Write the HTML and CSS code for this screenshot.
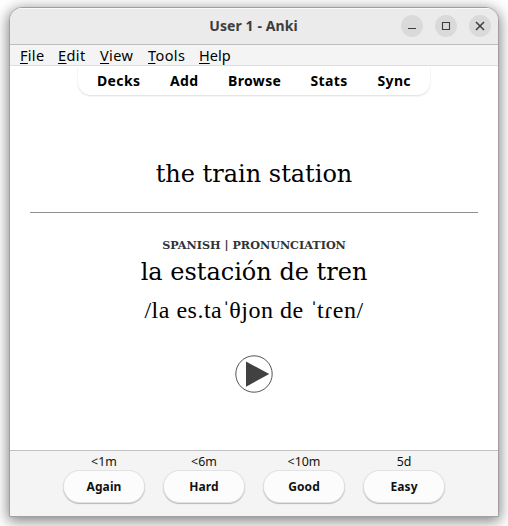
FILE: index.html
```html
<!DOCTYPE html>
<html lang="en">
<head>
<meta charset="utf-8">
<title>User 1 - Anki</title>
<link rel="stylesheet" href="styles.css">
</head>
<body>
<div class="window">
  <header class="titlebar">
    <h1 class="title">User 1 - Anki</h1>
    <div class="controls">
      <span class="control"><svg width="22" height="22" viewBox="0 0 22 22"><path d="M7 13.5h8"/></svg></span>
      <span class="control"><svg width="22" height="22" viewBox="0 0 22 22"><path d="M7.5 7.5h7v7h-7z"/></svg></span>
      <span class="control"><svg width="22" height="22" viewBox="0 0 22 22"><path class="cross" d="M7 7l8 8M15 7l-8 8"/></svg></span>
    </div>
  </header>
  <nav class="menubar">
    <span class="menu file"><u>F</u>ile</span>
    <span class="menu edit"><u>E</u>dit</span>
    <span class="menu view"><u>V</u>iew</span>
    <span class="menu tools"><u>T</u>ools</span>
    <span class="menu help"><u>H</u>elp</span>
  </nav>
  <main class="card">
    <nav class="toolbar">
      <span class="link decks">Decks</span>
      <span class="link add">Add</span>
      <span class="link browse">Browse</span>
      <span class="link stats">Stats</span>
      <span class="link sync">Sync</span>
    </nav>
    <p class="front">the train station</p>
    <hr class="answer-rule">
    <p class="caption">SPANISH | PRONUNCIATION</p>
    <p class="word">la estación de tren</p>
    <p class="ipa">/la es.ta<span class="stress">ˈ</span>θjon de <span class="stress">ˈ</span>tɾen/</p>
    <svg class="play" width="38" height="38" viewBox="0 0 38 38"><circle cx="19" cy="19" r="18.2"/><path d="M11 6.5v25.2L34.2 19z"/></svg>
  </main>
  <footer class="answers">
    <div class="answer"><span class="due">&lt;1m</span><button class="ease">Again</button></div>
    <div class="answer"><span class="due">&lt;6m</span><button class="ease">Hard</button></div>
    <div class="answer"><span class="due">&lt;10m</span><button class="ease">Good</button></div>
    <div class="answer"><span class="due">5d</span><button class="ease">Easy</button></div>
  </footer>
</div>
</body>
</html>
```
FILE: styles.css
```css
* { box-sizing: border-box; }
body {
  margin: 0;
  padding: 7px 9px 9px;
  height: 526px;
  overflow: hidden;
  background: #fff;
  font-family: "Noto Sans", "Open Sans", sans-serif;
}
p, h1 { margin: 0; white-space: nowrap; }
.window {
  display: flex;
  flex-direction: column;
  width: 490px;
  height: 510px;
  border: 1px solid #a0a0a0;
  border-radius: 13px 13px 0 0;
  overflow: hidden;
  background: #fff;
  box-shadow: 0 3px 14px 1px rgba(0, 0, 0, .5);
}
.titlebar {
  display: grid;
  grid-template-columns: 1fr auto 1fr;
  align-items: center;
  height: 37px;
  padding-right: 7px;
  border-bottom: 1px solid #bdbdbd;
  background: #ebebeb;
  box-shadow: inset 0 1px #f9f9f9;
}
.title {
  grid-column: 2;
  padding-left: 6px;
  font-size: 14px;
  line-height: 20px;
  letter-spacing: .1px;
  color: #3d3d3d;
}
.controls { display: flex; justify-content: flex-end; gap: 12px; }
.control { width: 22px; height: 22px; border-radius: 50%; background: #dadada; }
.control svg { display: block; fill: none; stroke: #3d3d3d; stroke-width: 1.1; }
.control .cross { stroke-width: 1.5; }
.menubar {
  display: flex;
  gap: 14px;
  height: 21px;
  padding-left: 10px;
  border-bottom: 1px solid #dfdfdf;
  background: #f4f4f4;
  color: #000;
  font-size: 14.5px;
  line-height: 21px;
}
.menu { white-space: nowrap; }
.menu u { text-decoration-thickness: 1px; text-underline-offset: 2px; text-decoration-skip-ink: none; }
.file { width: 24px; letter-spacing: .3px; }
.edit { width: 28px; letter-spacing: .4px; }
.view { width: 34px; letter-spacing: .4px; }
.tools { width: 37px; letter-spacing: .4px; }
.help { width: 32px; }
.card { display: flex; flex-direction: column; align-items: center; height: 384px; color: #000; }
.toolbar {
  display: flex;
  gap: 30px;
  width: 352px;
  height: 29px;
  padding-left: 19px;
  border-radius: 0 0 13px 13px;
  box-shadow: 0 1px 2px rgba(0, 0, 0, .14);
  font-size: 14px;
  font-weight: 700;
  line-height: 30px;
}
.link { white-space: nowrap; letter-spacing: .35px; }
.decks { width: 43px; }
.add { width: 28px; }
.browse { width: 52.5px; }
.stats { width: 37px; }
.sync { width: 34px; }
.front, .word { font-family: "DejaVu Serif", serif; font-size: 24px; line-height: 28px; }
.front { margin-top: 65px; }
.answer-rule { width: 448px; margin: 24px 0 0; border: 0; border-top: 1px solid #8f8f8f; }
.caption { margin-top: 24px; font: 700 11.2px/16px "DejaVu Serif", serif; color: #333; }
.word { margin-top: 5px; }
.ipa { margin-top: 9px; font: 24px/30px "Liberation Serif", serif; letter-spacing: .5px; }
.stress { letter-spacing: -1px; }
.play { flex: none; margin-top: 30px; fill: none; stroke: #555; stroke-width: 1; }
.play path { fill: #414141; stroke: none; }
.answers {
  display: flex;
  flex: 1;
  justify-content: center;
  gap: 20px;
  padding-top: 2px;
  border-top: 1px solid #c2c2c2;
  background: #f4f4f4;
}
.answer { display: flex; flex-direction: column; align-items: center; width: 80px; }
.due { font-size: 12.4px; line-height: 18px; color: #111; }
.ease {
  flex: none;
  width: 80px;
  height: 31px;
  padding: 0;
  border: 0;
  border-radius: 16px;
  background: #fcfcfc;
  box-shadow: 0 0 0 1px #e2e2e2, 0 1px 1px 1px rgba(0, 0, 0, .25);
  color: #111;
  font: 700 12px/31px "Noto Sans", sans-serif;
  letter-spacing: .1px;
}
```
